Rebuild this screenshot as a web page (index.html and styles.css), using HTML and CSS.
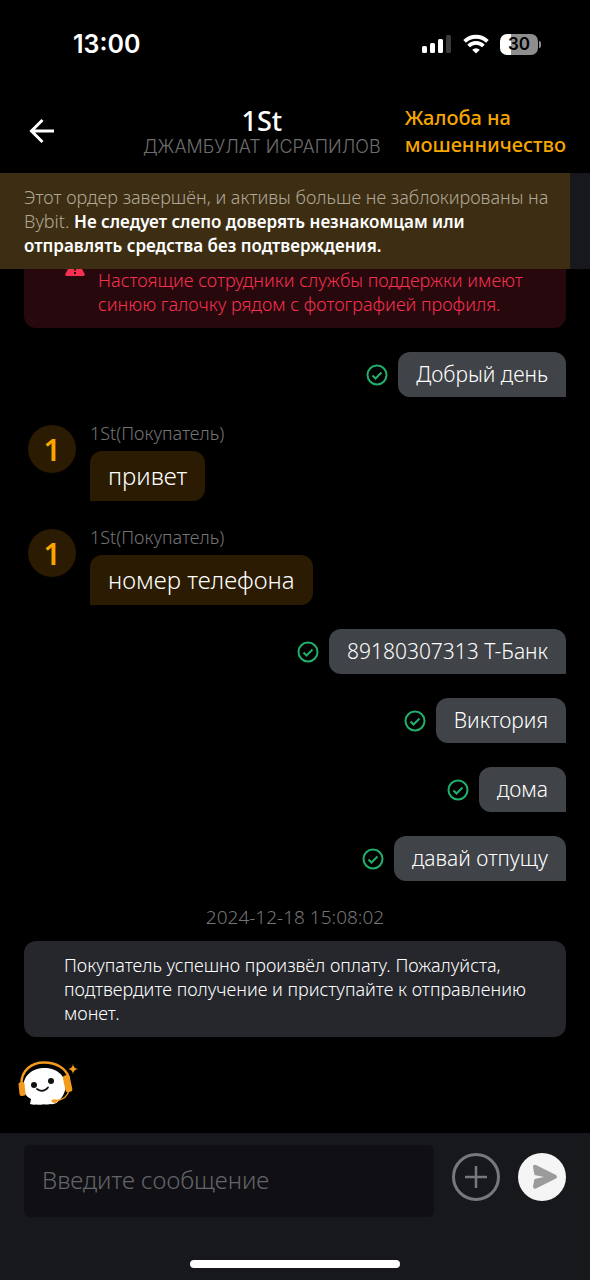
FILE: index.html
```html
<!DOCTYPE html>
<html lang="ru">
<head>
    <meta charset="UTF-8">
    <meta name="viewport" content="width=device-width, initial-scale=1.0">
    <title>1St</title>
    <link rel="stylesheet" href="styles.css">
</head>
<body>
    <div class="status-bar">
        <span class="clock">13:00</span>
        <div class="status-icons">
            <svg width="30" height="20" viewBox="0 0 30 20">
                <rect x="0" y="12" width="5" height="7" rx="1.5" fill="#fff"/>
                <rect x="8" y="9" width="5" height="10" rx="1.5" fill="#fff"/>
                <rect x="16" y="5" width="5" height="14" rx="1.5" fill="#fff"/>
                <rect x="24" y="1" width="5" height="18" rx="1.5" fill="#3a3a3a"/>
            </svg>
            <svg width="26" height="20" viewBox="0 0 26 20" fill="none" stroke="#fff" stroke-width="3.8">
                <path d="M1.600 7.400a16.300 16.300 0 0 1 22.800 0"/>
                <path d="M5.600 12a10.500 10.500 0 0 1 14.800 0"/>
                <path d="M13 19.600l-3.800-3.900a5.400 5.400 0 0 1 7.600 0z" fill="#fff" stroke="none"/>
            </svg>
            <div class="battery"><span>30</span></div>
        </div>
    </div>

    <header class="header">
        <button class="back" aria-label="Назад">
            <svg width="26" height="26" viewBox="0 0 26 26" fill="none" stroke="#fff" stroke-width="3">
                <path d="M25 13H3M13.500 2L2.500 13l11 11"/>
            </svg>
        </button>
        <div class="title">
            <h1>1St</h1>
            <p>ДЖАМБУЛАТ ИСРАПИЛОВ</p>
        </div>
        <a class="report" href="#">Жалоба на мошенничество</a>
    </header>

    <div class="notice">
        <p>Этот ордер завершён, и активы больше не заблокированы на Bybit. <b>Не следует слепо доверять незнакомцам или отправлять средства без подтверждения.</b></p>
    </div>

    <main class="chat">
        <div class="warning">
            <svg width="20" height="18" viewBox="0 0 20 18">
                <path d="M8.600 1q1.400-2 2.800 0l8.300 15q.7 2-1.500 2H1.800q-2.200 0-1.500-2z" fill="#f6304f"/>
                <path d="M10 5v7.500M10 14v2" stroke="#2a070c" stroke-width="2"/>
            </svg>
            <p>Настоящие сотрудники службы поддержки имеют синюю галочку рядом с фотографией профиля.</p>
        </div>

        <div class="msg me">
            <svg class="check" viewBox="0 0 22 22"><circle cx="11" cy="11" r="9.500"/><path d="M6.500 11.500l3 3 6-6"/></svg>
            <div class="bubble">Добрый день</div>
        </div>

        <div class="msg them">
            <div class="avatar">1</div>
            <div class="msg-body">
                <span class="name">1St(Покупатель)</span>
                <div class="bubble">привет</div>
            </div>
        </div>

        <div class="msg them">
            <div class="avatar">1</div>
            <div class="msg-body">
                <span class="name">1St(Покупатель)</span>
                <div class="bubble">номер телефона</div>
            </div>
        </div>

        <div class="msg me">
            <svg class="check" viewBox="0 0 22 22"><circle cx="11" cy="11" r="9.500"/><path d="M6.500 11.500l3 3 6-6"/></svg>
            <div class="bubble">89180307313 Т-Банк</div>
        </div>

        <div class="msg me">
            <svg class="check" viewBox="0 0 22 22"><circle cx="11" cy="11" r="9.500"/><path d="M6.500 11.500l3 3 6-6"/></svg>
            <div class="bubble">Виктория</div>
        </div>

        <div class="msg me">
            <svg class="check" viewBox="0 0 22 22"><circle cx="11" cy="11" r="9.500"/><path d="M6.500 11.500l3 3 6-6"/></svg>
            <div class="bubble">дома</div>
        </div>

        <div class="msg me">
            <svg class="check" viewBox="0 0 22 22"><circle cx="11" cy="11" r="9.500"/><path d="M6.500 11.500l3 3 6-6"/></svg>
            <div class="bubble">давай отпущу</div>
        </div>

        <div class="event">
            <time>2024-12-18 15:08:02</time>
            <p>Покупатель успешно произвёл оплату. Пожалуйста, подтвердите получение и приступайте к отправлению монет.</p>
        </div>

        <button class="bot" aria-label="Бот поддержки">
            <svg width="60" height="46" viewBox="0 0 60 46">
                <path d="M3.500 23C3 9 14 1.500 26 1.500S48 7 51 17" fill="none" stroke="#f39a1b" stroke-width="2.500"/>
                <path d="M12 43l1-5C7 35 5.500 30 5.500 25.500 5.500 14 15 7 26.500 7S47.500 14 47.500 25c0 8-4.500 13-9 17q-3 1.500-6 1-4 1-7 .3-4 1-7 .2-3 .5-6.500-.5z" fill="#fff"/>
                <rect x="1" y="21" width="6" height="14" rx="2" fill="#f39a1b" transform="rotate(-6 4 28)"/>
                <rect x="46" y="14" width="7" height="17" rx="2.500" fill="#f39a1b" transform="rotate(-12 50 22)"/>
                <path d="M51 29c-1 6-6 10-14 11" fill="none" stroke="#f39a1b" stroke-width="1.500"/>
                <ellipse cx="36.500" cy="40" rx="3" ry="1.800" fill="#f39a1b"/>
                <circle cx="16" cy="24" r="3" fill="#111"/>
                <circle cx="33" cy="20" r="3" fill="#111"/>
                <path d="M19 28q6 4.500 11-1.500" fill="none" stroke="#111" stroke-width="1.800" stroke-linecap="round"/>
                <path d="M55 3q.6 4.400 5 5-4.400.6-5 5-.6-4.400-5-5 4.400-.6 5-5z" fill="#f39a1b"/>
            </svg>
        </button>
    </main>

    <footer class="footer">
        <form class="composer">
            <input type="text" placeholder="Введите сообщение" aria-label="Введите сообщение">
            <button type="button" aria-label="Прикрепить">
                <svg width="48" height="48" viewBox="0 0 48 48" fill="none" stroke="#77787b" stroke-width="3">
                    <circle cx="24" cy="24" r="22.500"/>
                    <path d="M24 13v22M13 24h22" stroke-width="2.500"/>
                </svg>
            </button>
            <button type="submit" aria-label="Отправить">
                <svg width="48" height="48" viewBox="0 0 48 48">
                    <circle cx="24" cy="24" r="24" fill="#f5f5f5"/>
                    <path d="M15 14q0-3 3-2l20 10q2 2 0 3.500L18 35.500q-3 1-3-2l1.500-7.500 9.500-2-9.500-2z" fill="#9b9b9b"/>
                </svg>
            </button>
        </form>
        <div class="home-bar"></div>
    </footer>
</body>
</html>
```
FILE: styles.css
```css
* {
    box-sizing: border-box;
}

body {
    margin: 0;
    height: 100vh;
    display: flex;
    flex-direction: column;
    background-color: #000;
    color: #fff;
    font-family: "Noto Sans", sans-serif;
    font-size: 18px;
    font-weight: 300;
    line-height: 24px;
}

h1, p {
    margin: 0;
}

button {
    padding: 0;
    border: none;
    background: none;
    cursor: pointer;
}

svg {
    display: block;
    flex-shrink: 0;
}

.status-bar {
    height: 88px;
    padding: 0 52px 0 73px;
    display: flex;
    justify-content: space-between;
    align-items: center;
    font-family: Inter, sans-serif;
    font-weight: 600;
}

.clock {
    font-size: 25px;
}

.status-icons {
    display: flex;
    align-items: center;
    gap: 11px;
}

.battery {
    width: 38px;
    height: 21px;
    position: relative;
    border-radius: 7px;
    background: linear-gradient(to right, #fff 30%, #8e8e8e 30%);
    color: #000;
    font-size: 17px;
    line-height: 21px;
    text-align: center;
}

.battery::after {
    content: "";
    position: absolute;
    right: -3px;
    top: 7px;
    width: 2px;
    height: 7px;
    border-radius: 0 2px 2px 0;
    background-color: #8e8e8e;
}

.header {
    height: 85px;
    padding: 0 24px 0 29px;
    display: flex;
    align-items: center;
}

.title {
    margin: 4px 24px 0 auto;
    text-align: center;
    white-space: nowrap;
}

.title h1 {
    font-size: 27px;
    font-weight: 500;
    line-height: 28px;
}

.title p {
    color: #6d6d6d;
    font-family: Inter, sans-serif;
}

.report {
    width: min-content;
    color: #f7a600;
    font-size: 20px;
    font-weight: 500;
    line-height: 27px;
    text-decoration: none;
}

.notice {
    padding-right: 20px;
    background-color: #16181d;
}

.notice p {
    padding: 12px 12px 12px 24px;
    background-color: #3d2e13;
    color: #b0a797;
}

.notice b {
    color: #fff;
    font-size: 17px;
    font-weight: 600;
    line-height: 20px;
}

.chat {
    flex: 1;
    min-height: 0;
    padding: 0 24px 26px;
    overflow: hidden;
    display: flex;
    flex-direction: column;
    justify-content: flex-end;
    gap: 24px;
}

.warning {
    flex-shrink: 0;
    padding: 24px 36px 12px 41px;
    display: flex;
    gap: 13px;
    border-radius: 12px;
    background-color: #27080c;
    color: #f6304f;
}

.warning svg {
    margin-top: -10px;
}

.msg {
    display: flex;
}

.bubble {
    padding: 0 18px;
    border-radius: 12px;
}

.me {
    justify-content: flex-end;
    align-items: center;
    gap: 10px;
}

.me .bubble {
    border-bottom-right-radius: 0;
    background-color: #404347;
    font-size: 21px;
    line-height: 45px;
}

.check {
    width: 22px;
    height: 22px;
    fill: none;
    stroke: #20b26c;
    stroke-width: 2;
}

.them {
    padding-left: 4px;
    gap: 14px;
}

.avatar {
    width: 48px;
    height: 48px;
    margin-top: 4px;
    border-radius: 50%;
    background-color: #2a1b02;
    color: #f7a600;
    font-size: 30px;
    font-weight: 600;
    line-height: 50px;
    text-align: center;
}

.msg-body {
    display: flex;
    flex-direction: column;
    align-items: flex-start;
    gap: 6px;
}

.name {
    color: #757575;
}

.them .bubble {
    border-bottom-left-radius: 0;
    background-color: #2a1b02;
    font-size: 24px;
    line-height: 50px;
}

.event {
    display: flex;
    flex-direction: column;
    gap: 12px;
}

.event time {
    color: #757575;
    font-size: 19px;
    text-align: center;
}

.event p {
    padding: 12px 36px 12px 40px;
    border-radius: 12px;
    background-color: #25272c;
}

.bot {
    align-self: flex-start;
    margin-left: -6px;
}

.footer {
    padding: 12px 24px;
    background-color: #17181c;
}

.composer {
    display: flex;
    gap: 18px;
}

.composer input {
    flex: 1;
    min-width: 0;
    height: 72px;
    padding: 0 18px 4px;
    border: none;
    border-radius: 6px;
    background-color: #101014;
    color: #fff;
    font-family: inherit;
    font-size: 24px;
    font-weight: 300;
}

.composer input::placeholder {
    color: #646569;
}

.composer button {
    height: 48px;
    margin-top: 8px;
}

.home-bar {
    width: 210px;
    height: 8px;
    margin: 43px auto 0;
    border-radius: 4px;
    background-color: #fff;
}
```
